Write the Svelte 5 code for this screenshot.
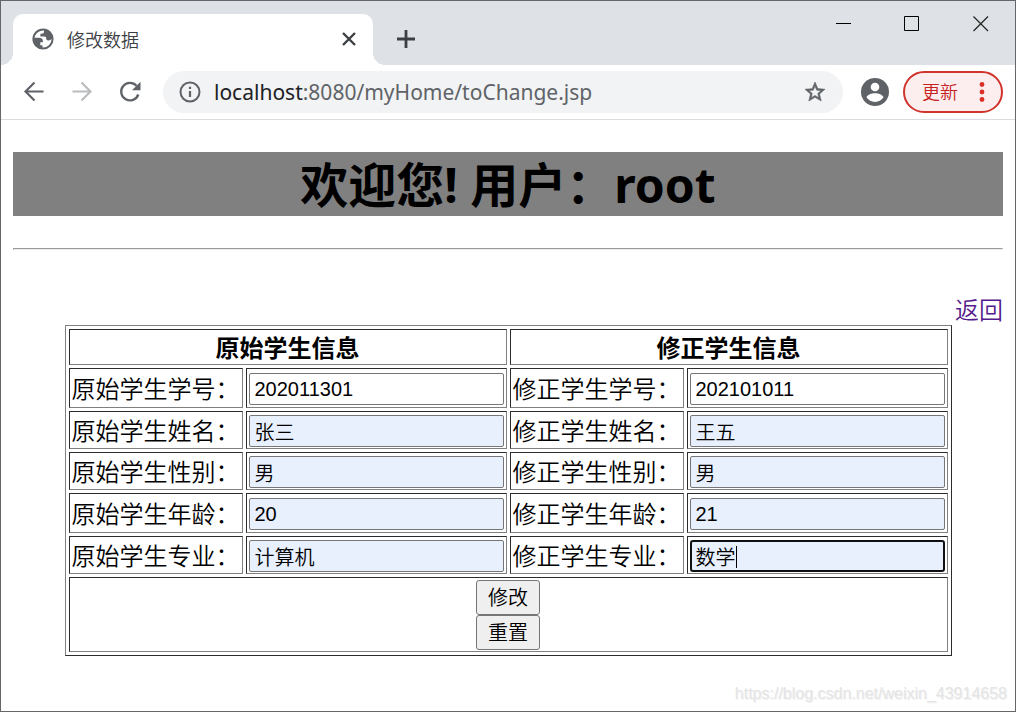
<script lang="ts">
  type Field = {
    label: string;
    original: string;
    revised: string;
    filled: boolean;
    tall: boolean;
  };

  const tabTitle = '修改数据';
  const host = 'localhost';
  const path = ':8080/myHome/toChange.jsp';

  const initial: Field[] = [
    { label: '学号', original: '202011301', revised: '202101011', filled: false, tall: true },
    { label: '姓名', original: '张三', revised: '王五', filled: true, tall: false },
    { label: '性别', original: '男', revised: '男', filled: true, tall: false },
    { label: '年龄', original: '20', revised: '21', filled: true, tall: true },
    { label: '专业', original: '计算机', revised: '数学', filled: true, tall: false }
  ];

  let fields = $state(initial.map((f) => ({ ...f })));

  function reset() {
    fields = initial.map((f) => ({ ...f }));
  }
</script>

<div class="window">
  <header class="titlebar">
    <div class="tab">
      <svg class="favicon" viewBox="0 0 22 22" fill="#5f6368" aria-hidden="true">
        <circle cx="11" cy="11" r="9.6" fill="#fff" stroke="#5f6368" stroke-width="2" />
        <path d="M12 1.5v2.300c0 1.200-.9 2-2.200 2H8.400v2.600h4.200c1.200 0 1.600.9 1.600 2.100 0 1.300.9 2 2.300 2 1.700 0 2.700-.9 4-2.500C20.300 5.200 16.600 1.500 12 1.500z" />
        <path d="M1.800 9.800h4.800c2.800 0 4.300 1 4.300 3.200v1.300H8.300v2.900h2.200v3.200C5.500 20.200 1.300 16 1.800 9.800z" />
      </svg>
      <span class="tab-title">{tabTitle}</span>
      <button class="icon-btn tab-close" aria-label="关闭标签页">
        <svg width="14" height="14" viewBox="0 0 14 14">
          <path d="M1 1l12 12M13 1L1 13" stroke="#3c4043" stroke-width="2.4" />
        </svg>
      </button>
    </div>
    <button class="icon-btn new-tab" aria-label="打开新的标签页">
      <svg width="18" height="18" viewBox="0 0 18 18">
        <path d="M9 0v18M0 9h18" stroke="#3c4043" stroke-width="2.8" />
      </svg>
    </button>
    <div class="controls">
      <button class="icon-btn" aria-label="最小化">
        <svg width="16" height="16" viewBox="0 0 16 16">
          <path d="M1 7.5h15" stroke="#000" />
        </svg>
      </button>
      <button class="icon-btn" aria-label="最大化">
        <svg width="16" height="16" viewBox="0 0 16 16">
          <path d="M.5.5h14v14H.5z" fill="none" stroke="#000" />
        </svg>
      </button>
      <button class="icon-btn" aria-label="关闭">
        <svg width="16" height="16" viewBox="0 0 16 16">
          <path d="M.5.5L15 15M15 .5L.5 15" stroke="#222" stroke-width="1.2" />
        </svg>
      </button>
    </div>
  </header>

  <nav class="toolbar">
    <div class="nav-buttons">
      <button class="icon-btn" aria-label="后退">
        <svg width="24" height="24" viewBox="0 0 24 24" fill="none" stroke="#5f6368" stroke-width="2.2">
          <path d="M21.5 11.5h-18M12.5 2.5l-9 9 9 9" />
        </svg>
      </button>
      <button class="icon-btn" aria-label="前进">
        <svg width="24" height="24" viewBox="0 0 24 24" fill="none" stroke="#babcbe" stroke-width="2.2">
          <path d="M2.5 11.5h18M11.5 2.5l9 9-9 9" />
        </svg>
      </button>
      <button class="icon-btn" aria-label="重新加载">
        <svg width="24" height="24" viewBox="0 0 24 24">
          <path d="M20.3 14.5A8.8 8.8 0 1 1 18.5 5.7" fill="none" stroke="#5f6368" stroke-width="2.3" />
          <path d="M22.5 1.8v8.500H14z" fill="#5f6368" />
        </svg>
      </button>
    </div>

    <div class="omnibox">
      <svg width="22" height="22" viewBox="0 0 22 22" aria-hidden="true">
        <circle cx="11" cy="11" r="9.5" fill="none" stroke="#5f6368" stroke-width="2" />
        <path d="M11 10v6M11 5.800v2.300" stroke="#5f6368" stroke-width="2.2" />
      </svg>
      <span class="url"><span class="host">{host}</span>{path}</span>
      <button class="icon-btn" aria-label="为此标签页添加书签">
        <svg width="24" height="24" viewBox="0 0 24 24">
          <path
            d="M22 9.240l-7.190-.62L12 2 9.190 8.630 2 9.240l5.460 4.730L5.820 21 12 17.270 18.180 21l-1.630-7.030L22 9.240zM12 15.400l-3.760 2.270 1-4.280-3.320-2.880 4.380-.38L12 6.100l1.710 4.040 4.380.38-3.320 2.880 1 4.280L12 15.400z"
            fill="#5f6368"
            stroke="#5f6368"
            stroke-width=".6"
          />
        </svg>
      </button>
    </div>

    <button class="icon-btn" aria-label="个人资料">
      <svg width="28" height="28" viewBox="0 0 28 28">
        <circle cx="14" cy="14" r="14" fill="#5f6368" />
        <circle cx="14" cy="9" r="4.3" fill="#fff" />
        <path d="M5.600 19.600c0-2.900 5.600-4.300 8.400-4.300s8.400 1.400 8.400 4.300C20.500 22.400 17.500 24 14 24s-6.500-1.600-8.400-4.400z" fill="#fff" />
      </svg>
    </button>

    <button class="update">
      更新
      <svg width="6" height="20" viewBox="0 0 6 20" fill="#d93025" aria-hidden="true">
        <circle cx="3" cy="2.5" r="2.4" />
        <circle cx="3" cy="10" r="2.4" />
        <circle cx="3" cy="17.5" r="2.4" />
      </svg>
    </button>
  </nav>

  <main class="page">
    <h1>欢迎您! 用户：root</h1>
    <hr />
    <div class="back"><a href="#back">返回</a></div>

    <form onsubmit={(e) => e.preventDefault()}>
      <table>
        <thead>
          <tr>
            <th colspan="2">原始学生信息</th>
            <th colspan="2">修正学生信息</th>
          </tr>
        </thead>
        <tbody>
          {#each fields as field, i}
            <tr class:tall={field.tall}>
              <td><label for={`original-${i}`}>原始学生{field.label}：</label></td>
              <td class="entry">
                <input id={`original-${i}`} type="text" class:filled={field.filled} bind:value={field.original} />
              </td>
              <td><label for={`revised-${i}`}>修正学生{field.label}：</label></td>
              <td class="entry">
                <div class="input-wrap">
                  <input
                    id={`revised-${i}`}
                    type="text"
                    class:filled={field.filled}
                    class:active={i === fields.length - 1}
                    bind:value={field.revised}
                  />
                  {#if i === fields.length - 1}
                    <span class="caret"></span>
                  {/if}
                </div>
              </td>
            </tr>
          {/each}
          <tr>
            <td colspan="4" class="actions">
              <div class="action-list">
                <button type="submit">修改</button>
                <button type="button" onclick={reset}>重置</button>
              </div>
            </td>
          </tr>
        </tbody>
      </table>
    </form>
  </main>

  <footer>https://blog.csdn.net/weixin_43914658</footer>
</div>

<style>
  :global(body) {
    background: #fff;
  }

  .window {
    display: flex;
    flex-direction: column;
    min-height: 100vh;
    box-sizing: border-box;
    border: 1px solid #66676a;
    background: #fff;
    color: #000;
    font-family: 'Noto Sans', 'Noto Sans CJK SC', sans-serif;
  }

  svg {
    display: block;
    flex: none;
  }

  .icon-btn {
    display: flex;
    align-items: center;
    justify-content: center;
    flex: none;
    padding: 0;
    border: 0;
    background: none;
  }

  /* title bar */
  .titlebar {
    display: flex;
    align-items: flex-end;
    height: 64px;
    padding-left: 12px;
    background: #dee1e6;
  }

  .tab {
    position: relative;
    display: flex;
    align-items: center;
    flex: 0 1 360px;
    height: 51px;
    padding: 0 17px 1px 19px;
    box-sizing: border-box;
    border-radius: 10px 10px 0 0;
    background: #fff;
  }

  /* flared feet of the tab */
  .tab::before,
  .tab::after {
    content: '';
    position: absolute;
    bottom: 0;
    width: 12px;
    height: 12px;
  }

  .tab::before {
    right: 100%;
    background: radial-gradient(circle at 0 0, transparent 12px, #fff 12px);
  }

  .tab::after {
    left: 100%;
    background: radial-gradient(circle at 100% 0, transparent 12px, #fff 12px);
  }

  .favicon {
    width: 22px;
    height: 22px;
  }

  .tab-title {
    flex: 1;
    padding: 2px 0 0 13px;
    font-size: 18px;
    font-weight: 350;
    line-height: 24px;
    color: #3c4043;
  }

  .new-tab {
    height: 52px;
    padding: 0 24px;
  }

  .controls {
    display: flex;
    align-self: flex-start;
    gap: 53px;
    margin-left: auto;
    padding: 15px 26px 0 0;
  }

  /* toolbar */
  .toolbar {
    display: flex;
    align-items: center;
    height: 54px;
    padding: 0 12px 0 21px;
    border-bottom: 1px solid #dadce0;
  }

  .nav-buttons {
    display: flex;
    gap: 24px;
  }

  .omnibox {
    display: flex;
    align-items: center;
    flex: 1;
    height: 42px;
    margin: 0 18px 0 21px;
    padding: 0 16px;
    border-radius: 21px;
    background: #f1f3f4;
  }

  .url {
    flex: 1;
    padding-left: 13px;
    font-size: 21px;
    line-height: 28px;
    color: #5f6368;
  }

  .host {
    color: #202124;
  }

  .update {
    display: flex;
    align-items: center;
    justify-content: space-between;
    width: 100px;
    height: 42px;
    margin-left: 14px;
    padding: 0 16px 0 17px;
    border: 2px solid #d0342c;
    border-radius: 21px;
    background: #fceeee;
    color: #c5221f;
    font-family: inherit;
    font-size: 18px;
    font-weight: 350;
    line-height: 24px;
  }

  /* page */
  .page {
    display: flex;
    flex-direction: column;
    padding: 32px 12px 0;
    font-size: 24px;
    line-height: 32px;
  }

  h1 {
    margin: 0;
    padding-top: 2px;
    background: #808080;
    font-size: 48px;
    line-height: 62px;
    text-align: center;
  }

  hr {
    width: 100%;
    margin: 32px 0 0;
    box-sizing: border-box;
    border: 1px solid;
    border-color: #9a9a9a #eee #eee #9a9a9a;
  }

  .back {
    padding-top: 45px;
    line-height: 30px;
    text-align: right;
  }

  a {
    color: #551a8b;
    font-weight: 350;
    text-decoration: none;
  }

  table {
    margin: 0 auto;
    border: 1px solid;
    border-color: #808080 #2c2c2c #2c2c2c #808080;
    border-collapse: separate;
    border-spacing: 3px;
  }

  th,
  td {
    box-sizing: border-box;
    height: 38px;
    padding: 1px 2px;
    border: 1px solid;
    border-color: #2c2c2c #808080 #808080 #2c2c2c;
    vertical-align: middle;
  }

  th {
    height: 36px;
    padding: 2px 2px 0;
  }

  .tall td {
    height: 40px;
  }

  label {
    display: block;
    width: 168px;
    padding-top: 2px;
    font-weight: 350;
    white-space: nowrap;
  }

  td.entry {
    padding: 3px 2px 1px;
  }

  .input-wrap {
    position: relative;
  }

  input {
    display: block;
    width: 255px;
    height: 32px;
    box-sizing: border-box;
    padding: 0 5px;
    border: 1px solid #767676;
    border-radius: 2px;
    background: #fff;
    color: #000;
    font-family: 'Liberation Sans', 'Noto Sans CJK SC', sans-serif;
    font-size: 20px;
    font-weight: 350;
  }

  .filled {
    background: #e8f0fe;
  }

  .active {
    padding: 0 4px;
    border: 2px solid #101010;
    border-radius: 3px;
    outline: none;
  }

  .caret {
    position: absolute;
    top: 6px;
    left: 46px;
    width: 1px;
    height: 22px;
    background: #000;
  }

  .actions {
    padding: 2px 2px 1px;
  }

  .action-list {
    display: flex;
    flex-direction: column;
    align-items: center;
  }

  .action-list button {
    width: 64px;
    height: 35px;
    padding: 0;
    border: 1px solid #767676;
    border-radius: 3px;
    background: #efefef;
    color: #000;
    font-family: 'Liberation Sans', 'Noto Sans CJK SC', sans-serif;
    font-size: 20px;
    font-weight: 350;
    line-height: 30px;
  }

  footer {
    margin-top: auto;
    padding: 0 8px 5px;
    color: #e4e4e4;
    font-family: 'Liberation Sans', sans-serif;
    font-size: 16px;
    line-height: 24px;
    text-align: right;
    text-shadow: 1px 1px 0 #f2f2f2;
  }
</style>
